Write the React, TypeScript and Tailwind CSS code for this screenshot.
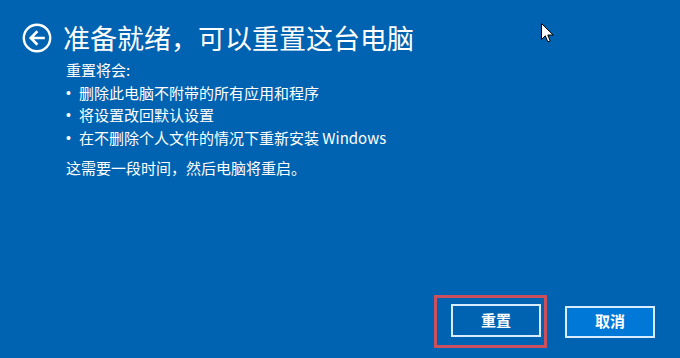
import React from "react";

const items = [
  "删除此电脑不附带的所有应用和程序",
  "将设置改回默认设置",
  "在不删除个人文件的情况下重新安装 Windows",
];

function BackIcon() {
  return (
    <svg width="30" height="30" viewBox="0 0 30 30" fill="none">
      <circle cx="15" cy="15" r="13.2" stroke="white" strokeWidth="2.4" />
      <path d="M21.5 15H9M14.5 9.2L8.8 15l5.7 5.8" stroke="white" strokeWidth="2.6" strokeLinecap="square" />
    </svg>
  );
}

function Cursor() {
  return (
    <svg className="absolute left-[541px] top-[23px]" width="13" height="20" viewBox="0 0 13 20">
      <path d="M0.5 0.5V16.5L4.3 12.8L6.8 18.8L9.2 17.8L6.8 12H12.2Z" fill="white" stroke="black" strokeWidth="1" strokeLinejoin="miter" />
    </svg>
  );
}

export default function App() {
  return (
    <div className="relative w-[680px] h-[358px] overflow-hidden bg-[#0063b1] text-white flex flex-col font-['Segoe_UI','Noto_Sans_CJK_SC',sans-serif]">
      <div className="flex items-center gap-[11px] pl-[22px] pt-[22px]">
        <BackIcon />
        <h1 className="text-[27px] leading-[32px] font-normal">准备就绪，可以重置这台电脑</h1>
      </div>

      <div className="pl-[66px] pt-[5px] text-[15px] leading-[22.5px]">
        <p>重置将会:</p>
        <ul>
          {items.map((t) => (
            <li key={t} className="flex">
              <span className="w-[13px] font-['Liberation_Sans',sans-serif] text-[14px]">•</span>
              <span>{t}</span>
            </li>
          ))}
        </ul>
        <p className="mt-[8px]">这需要一段时间，然后电脑将重启。</p>
      </div>

      <div className="flex-1" />

      <div className="flex items-center justify-end gap-[18px] pr-[25px] pb-[10px]">
        <div className="border-[3px] border-[#c9505c] pl-[14px] pr-[3px] pt-[6px] pb-[8px]">
          <button className="w-[90px] h-[33px] border-2 border-[#d8ecff] bg-[#0063b1] text-[15px] font-bold">
            重置
          </button>
        </div>
        <button className="w-[90px] h-[32px] border-2 border-[#d8ecff] bg-[#0078d7] text-[15px] font-bold">
          取消
        </button>
      </div>

      <Cursor />
    </div>
  );
}
